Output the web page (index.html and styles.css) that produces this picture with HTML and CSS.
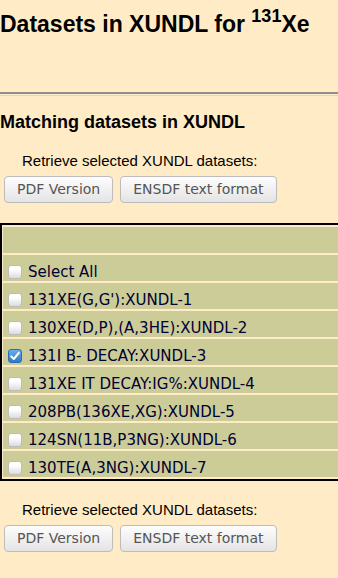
FILE: index.html
```html
<!DOCTYPE html>
<html lang="en">
<head>
  <meta charset="UTF-8">
  <meta name="viewport" content="width=device-width, initial-scale=1.0">
  <title>Datasets in XUNDL for 131Xe</title>
  <link rel="stylesheet" href="styles.css">
</head>
<body>
  <h1>Datasets in XUNDL for <sup>131</sup>Xe</h1>
  <hr>
  <h3>Matching datasets in XUNDL</h3>

  <form class="datasets">
    <div class="retrieve">
      <p>Retrieve selected XUNDL datasets:</p>
      <div class="buttons">
        <button type="button" class="btn">PDF Version</button>
        <button type="button" class="btn">ENSDF text format</button>
      </div>
    </div>

    <div class="table-wrap">
      <table class="list">
        <tr><td class="head"></td></tr>
        <tr><td><label class="item"><input type="checkbox"><span class="box"></span>Select All</label></td></tr>
        <tr><td><label class="item"><input type="checkbox"><span class="box"></span>131XE(G,G'):XUNDL-1</label></td></tr>
        <tr><td><label class="item"><input type="checkbox"><span class="box"></span>130XE(D,P),(A,3HE):XUNDL-2</label></td></tr>
        <tr><td><label class="item"><input type="checkbox" checked><span class="box checked"><svg width="12" height="12" viewBox="0 0 12 12"><path d="M2.2 6.4 L4.8 9 L9.8 2.8" fill="none" stroke="#fff" stroke-width="2" stroke-linecap="round" stroke-linejoin="round"/></svg></span>131I B- DECAY:XUNDL-3</label></td></tr>
        <tr><td><label class="item"><input type="checkbox"><span class="box"></span>131XE IT DECAY:IG%:XUNDL-4</label></td></tr>
        <tr><td><label class="item"><input type="checkbox"><span class="box"></span>208PB(136XE,XG):XUNDL-5</label></td></tr>
        <tr><td><label class="item"><input type="checkbox"><span class="box"></span>124SN(11B,P3NG):XUNDL-6</label></td></tr>
        <tr><td><label class="item"><input type="checkbox"><span class="box"></span>130TE(A,3NG):XUNDL-7</label></td></tr>
      </table>
    </div>

    <div class="retrieve bottom">
      <p>Retrieve selected XUNDL datasets:</p>
      <div class="buttons">
        <button type="button" class="btn">PDF Version</button>
        <button type="button" class="btn">ENSDF text format</button>
      </div>
    </div>
  </form>
</body>
</html>
```
FILE: styles.css
```css
html, body {
  overflow-x: hidden;
}
body {
  margin: 0;
  background-color: #ffecc6;
  font-family: "Liberation Sans", Arial, sans-serif;
  color: #000;
}
h1 {
  font-size: 23px;
  margin: 11px 0 0 0;
  height: 81px;
}
h1 sup {
  font-size: 18px;
  vertical-align: 10px;
  line-height: 0;
}
hr {
  margin: 0;
  border: 0;
  border-top: 2px solid #8e8e8e;
  border-bottom: 1px solid #d8d8d8;
  height: 1px;
}
h3 {
  font-size: 18px;
  margin: 16px 0 0 0;
}
.retrieve {
  margin-top: 19px;
}
.retrieve p {
  margin: 0 0 0 22px;
  font-size: 15px;
}
.retrieve.bottom {
  margin-top: 20px;
}
.buttons {
  display: flex;
  gap: 7px;
  margin: 7px 0 0 4px;
}
.btn {
  font-family: "DejaVu Sans", Verdana, sans-serif;
  font-size: 14px;
  line-height: 17px;
  color: #555;
  padding: 4px 12px;
  border: 1px solid #bcbcbc;
  border-radius: 4px;
  background: linear-gradient(#fdfdfd, #e4e4e4);
}
.table-wrap {
  margin-top: 20px;
  width: 338px;
  overflow: hidden;
}
.list {
  width: 420px;
  border: 2px solid #000;
  border-spacing: 1px 2px;
}
.list td {
  background-color: #cccc99;
  height: 26px;
  padding: 0;
  vertical-align: bottom;
}
.item {
  display: flex;
  align-items: center;
  gap: 6px;
  padding-left: 5px;
  font-family: "DejaVu Sans", Verdana, sans-serif;
  font-size: 15px;
  color: #000033;
}
.item input {
  display: none;
}
.box {
  width: 12px;
  height: 12px;
  border: 1px solid #bdbdbd;
  border-radius: 3px;
  background: linear-gradient(#ffffff 30%, #dcdcdc);
  display: flex;
  align-items: center;
  justify-content: center;
}
.box.checked {
  border-color: #2b6db0;
  background: linear-gradient(#6aaeea, #2e7acb);
}
```
